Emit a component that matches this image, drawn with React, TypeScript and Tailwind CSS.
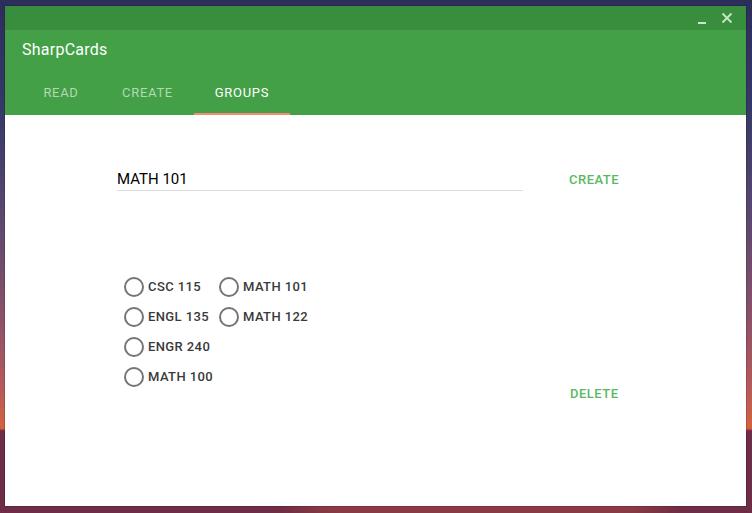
import React from "react";

const courses1 = ["CSC 115", "ENGL 135", "ENGR 240", "MATH 100"];
const courses2 = ["MATH 101", "MATH 122"];

function Radio({ label }: { label: string }) {
  return (
    <div className="flex h-[30px] items-center">
      <span className="box-border h-[20px] w-[20px] rounded-full border-2 border-[#757575]" />
      <span className="ml-[4px] text-[13px] font-medium tracking-[0.4px] text-[#3a3a3a]">{label}</span>
    </div>
  );
}

export default function App() {
  return (
    <div
      className="relative h-[513px] w-[752px] overflow-hidden pl-[5px] pt-[6px]"
      style={{
        fontFamily: "Roboto, 'Noto Sans', sans-serif",
        background:
          "linear-gradient(to bottom, #2d2d5c 0%, #343866 20%, #5a4870 42%, #8b5168 62%, #b85a5a 76%, #d4623e 83.5%, #6e2c46 84%, #6e2c46 100%)",
      }}
    >
      <div className="pointer-events-none absolute bottom-0 left-[300px] h-[30px] w-[360px] rounded-full bg-[#c85a40] opacity-70 blur-[20px]" />
      <div className="relative flex h-[500px] w-[741px] flex-col bg-white shadow-[0_0_0_1px_rgba(0,0,0,0.15)]">
        {/* title bar */}
        <div className="flex h-[24px] items-center justify-end bg-[#388e3c] pr-[13px]">
          <svg width="10" height="10" viewBox="0 0 10 10" className="mr-[14px] mt-[4px]">
            <rect x="1" y="7" width="8" height="2" fill="#c8e6c9" />
          </svg>
          <svg width="12" height="12" viewBox="0 0 12 12">
            <path d="M1.5 1.5 L10.5 10.5 M10.5 1.5 L1.5 10.5" stroke="#c8e6c9" strokeWidth="1.8" />
          </svg>
        </div>
        {/* app bar */}
        <div className="flex h-[85px] flex-col bg-[#43a047]">
          <div className="mt-[1px] flex h-[38px] items-center pl-[17px] text-[16px] tracking-[0.25px] text-white">
            SharpCards
          </div>
          <div className="mt-[8px] flex h-[38px] pl-[16px] text-[13px] tracking-[0.7px]">
            <div className="flex w-[80px] items-center justify-center pb-[7px] text-white/60">READ</div>
            <div className="flex w-[93px] items-center justify-center pb-[7px] text-white/60">CREATE</div>
            <div className="flex w-[96px] flex-col">
              <div className="flex flex-1 items-center justify-center pb-[5px] text-white">GROUPS</div>
              <div className="h-[2px] bg-[#f28b7a]" />
            </div>
          </div>
        </div>
        {/* content */}
        <div className="flex flex-1 flex-col">
          <div className="ml-[112px] mt-[54px] flex items-start">
            <div className="w-[406px] border-b border-[#dddddd] pb-[1px] text-[15px] leading-[20px] text-black">
              MATH 101
            </div>
            <div className="ml-[46px] mt-[1px] text-[13px] font-medium leading-[20px] tracking-[0.5px] text-[#5cb85f]">
              CREATE
            </div>
          </div>
          <div className="ml-[119px] mt-[81px] flex items-end">
            <div className="flex w-[446px]">
              <div className="flex w-[95px] flex-col">
                {courses1.map((c) => (
                  <Radio key={c} label={c} />
                ))}
              </div>
              <div className="flex flex-col">
                {courses2.map((c) => (
                  <Radio key={c} label={c} />
                ))}
              </div>
            </div>
            <div className="mb-[-12px] text-[13px] font-medium leading-[20px] tracking-[0.5px] text-[#5cb85f]">
              DELETE
            </div>
          </div>
        </div>
      </div>
    </div>
  );
}
